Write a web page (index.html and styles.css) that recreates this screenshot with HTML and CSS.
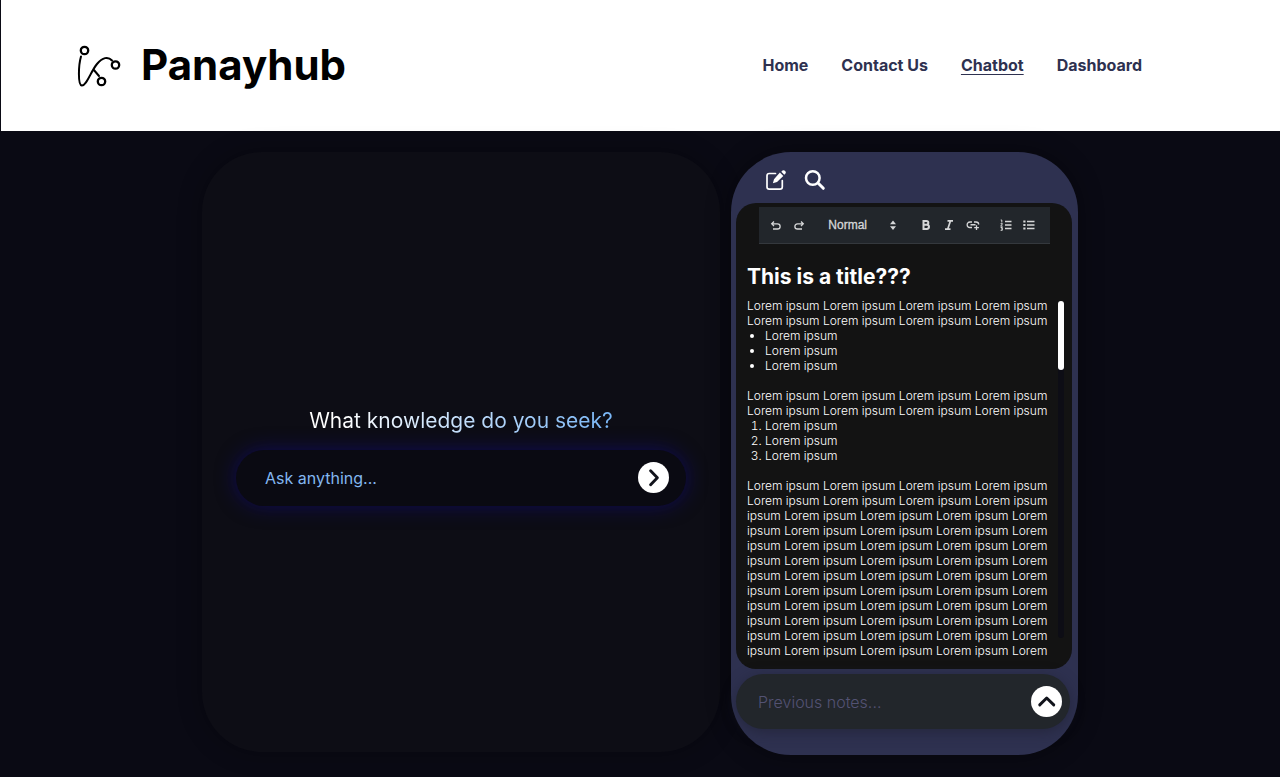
FILE: index.html
```html
<!DOCTYPE html>
<html lang="en">
<head>
<meta charset="utf-8">
<meta name="viewport" content="width=device-width, initial-scale=1">
<title>Panayhub</title>
<link rel="stylesheet" href="styles.css">
</head>
<body>
<header class="site-header">
  <div class="brand">
    <svg class="brand-mark" viewBox="0 -1 44 44" width="44" height="44" fill="none" stroke="#000" stroke-linecap="round" aria-hidden="true">
      <g stroke-width="2.3"><circle cx="7.5" cy="6.5" r="3.7"/><circle cx="38.5" cy="21" r="3.7"/><circle cx="24.5" cy="37.5" r="3.7"/></g>
      <path stroke-width="2" d="M4 12.500C1.500 21 .7 41 4.800 41.500C9.500 42 14 27 20 20C25.500 13.500 31 12 35 16.500M16.500 25.500L22 32"/>
    </svg>
    <span class="brand-name">Panayhub</span>
  </div>
  <nav class="site-nav">
    <a href="#">Home</a>
    <a href="#">Contact Us</a>
    <a href="#" class="active">Chatbot</a>
    <a href="#">Dashboard</a>
  </nav>
</header>
<main class="workspace">
  <section class="chat">
    <h1 class="chat-title">What knowledge do you seek?</h1>
    <form class="chat-form">
      <input class="chat-input" type="text" placeholder="Ask anything..." aria-label="Ask anything">
      <button class="round-button" type="button" aria-label="Send"><svg viewBox="0 0 32 32" width="31" height="31"><path d="M13 9L20 16.200L13 23.500"/></svg></button>
    </form>
  </section>
  <section class="notes">
    <div class="notes-actions">
      <button class="icon-button" type="button" aria-label="New note">
        <svg viewBox="0 0 22 22" width="22" height="22" fill="none" stroke="#fff" stroke-width="1.700" stroke-linecap="round" stroke-linejoin="round"><path d="M10.500 4.500H4.300Q2 4.500 2 6.800V18Q2 20.200 4.300 20.200H15Q17.300 20.200 17.300 18V11.500"/><path fill="#fff" stroke="none" d="M14.900 3.500L18.300 6.900L12 13L7.900 14.300L9 10.300ZM16.300 2.700L17.500 1.500Q18.800 .6 20.200 1.900Q21.400 3.200 20.500 4.400L19.300 5.800Z"/></svg>
      </button>
      <button class="icon-button" type="button" aria-label="Search">
        <svg viewBox="0 0 22 22" width="22" height="22" fill="none" stroke="#fff" stroke-linecap="round"><circle cx="8.800" cy="9" r="6.800" stroke-width="2.500"/><path stroke-width="3" d="M14.300 14.300L19.300 19.300"/></svg>
      </button>
    </div>
    <div class="sheet">
      <div class="toolbar" role="toolbar" aria-label="Text formatting">
        <div class="tool-group">
          <button type="button" aria-label="Undo"><svg viewBox="0 0 12 12"><path d="M4 2.500L1.700 4.800L4 7.100M1.700 4.800H7.500C11 4.800 11 10 7.500 10H3"/></svg></button>
          <button type="button" aria-label="Redo"><svg viewBox="0 0 12 12"><path d="M8 2.500L10.300 4.800L8 7.100M10.300 4.800H4.500C1 4.800 1 10 4.500 10H9"/></svg></button>
        </div>
        <div class="style-picker">
          <select aria-label="Text style"><option>Normal</option></select>
          <svg viewBox="0 0 12 12" aria-hidden="true"><path class="solid" d="M6 1.500L9 5.300H3ZM6 11L9 7.200H3Z"/></svg>
        </div>
        <div class="tool-group">
          <button type="button" aria-label="Bold"><svg viewBox="0 0 12 12"><path stroke-width="2" d="M3.500 2H6.300C9 2 9 5.700 6.300 5.700H3.500ZM3.500 5.700H6.800C9.700 5.700 9.700 10 6.800 10H3.500Z"/></svg></button>
          <button type="button" aria-label="Italic"><svg viewBox="0 0 12 12"><path stroke-width="1.700" d="M4.500 1.800H10M2 10.200H7.500M7.500 1.800L4.700 10.200"/></svg></button>
          <button type="button" aria-label="Insert link"><svg viewBox="0 0 14 12" class="link-icon"><path d="M6 3H4C.2 3 .2 8.500 4 8.500H6M8 3H10C11.700 3 12.700 4 12.700 5.500M4.500 5.750H9.500M10.500 6.300V11M8.200 8.600H12.900"/></svg></button>
        </div>
        <div class="tool-group">
          <button type="button" aria-label="Numbered list"><svg viewBox="0 0 12 12"><path d="M5 2.500H11.500M5 6H11.500M5 9.500H11.500"/><path stroke-width="1" d="M.7 1H1.800V3.500M.6 4.700H2.500L.7 7.200H2.700M.6 8.500H2.300V11.300H.6M1.100 9.900H2.300"/></svg></button>
          <button type="button" aria-label="Bulleted list"><svg viewBox="0 0 12 12"><path d="M4 2.500H11.500M4 6H11.500M4 9.500H11.500"/><path class="solid" d="M.3 1.500H2.500V3.500H.3ZM.3 5H2.500V7H.3ZM.3 8.500H2.500V10.500H.3Z"/></svg></button>
        </div>
      </div>
      <h2 class="note-title">This is a title???</h2>
      <div class="note-scroll">
        <div class="note-body">
          <p>Lorem ipsum Lorem ipsum Lorem ipsum Lorem ipsum Lorem ipsum Lorem ipsum Lorem ipsum Lorem ipsum</p>
          <ul><li>Lorem ipsum</li><li>Lorem ipsum</li><li>Lorem ipsum</li></ul>
          <p>Lorem ipsum Lorem ipsum Lorem ipsum Lorem ipsum Lorem ipsum Lorem ipsum Lorem ipsum Lorem ipsum</p>
          <ol><li>Lorem ipsum</li><li>Lorem ipsum</li><li>Lorem ipsum</li></ol>
          <p>
            Lorem ipsum Lorem ipsum Lorem ipsum Lorem ipsum
            Lorem ipsum Lorem ipsum Lorem ipsum Lorem ipsum
            ipsum Lorem ipsum Lorem ipsum Lorem ipsum Lorem
            ipsum Lorem ipsum Lorem ipsum Lorem ipsum Lorem
            ipsum Lorem ipsum Lorem ipsum Lorem ipsum Lorem
            ipsum Lorem ipsum Lorem ipsum Lorem ipsum Lorem
            ipsum Lorem ipsum Lorem ipsum Lorem ipsum Lorem
            ipsum Lorem ipsum Lorem ipsum Lorem ipsum Lorem
            ipsum Lorem ipsum Lorem ipsum Lorem ipsum Lorem
            ipsum Lorem ipsum Lorem ipsum Lorem ipsum Lorem
            ipsum Lorem ipsum Lorem ipsum Lorem ipsum Lorem
            ipsum Lorem ipsum Lorem ipsum Lorem ipsum Lorem
          </p>
        </div>
        <div class="scroll-track"><div class="scroll-thumb"></div></div>
      </div>
    </div>
    <div class="previous">
      <input class="previous-input" type="text" placeholder="Previous notes..." aria-label="Previous notes">
      <button class="round-button" type="button" aria-label="Show previous notes"><svg viewBox="0 0 32 32" width="31" height="31"><path d="M9 19.500L16.200 12.300L23.500 19.500"/></svg></button>
    </div>
  </section>
</main>
</body>
</html>
```
FILE: styles.css
```css
* { box-sizing: border-box; }

body {
  margin: 0;
  min-height: 100vh;
  display: flex;
  flex-direction: column;
  background: #0a0a14;
  color: #fff;
  font-family: Inter, "Liberation Sans", sans-serif;
}

button, input, select { font: inherit; color: inherit; margin: 0; padding: 0; border: 0; background: none; }
button { cursor: pointer; }
h1, h2, p, ul, ol { margin: 0; padding: 0; }

.site-header {
  display: flex;
  align-items: center;
  justify-content: space-between;
  padding: 38px 138px 40px 76px;
  border-left: 1px solid #0a0a14;
  background: #fff;
}

.brand { display: flex; align-items: center; gap: 20px; color: #000; }
.brand-mark { display: block; }
.brand-name { font-size: 42px; line-height: 53px; font-weight: 700; }

.site-nav { display: flex; gap: 33px; font-size: 16px; line-height: 20px; font-weight: 700; }
.site-nav a { color: #2e3150; text-decoration: none; }
.site-nav .active { text-decoration: underline; text-decoration-thickness: 1px; text-underline-offset: 3px; }

.workspace {
  flex: 1;
  width: 100%;
  max-width: 876px;
  margin: 0 auto;
  padding: 21px 0 22px;
  display: grid;
  grid-template-columns: 518fr 347fr;
  gap: 11px;
}

.chat {
  display: flex;
  flex-direction: column;
  justify-content: center;
  gap: 15px;
  margin-bottom: 3px;
  padding: 8px 34px 0;
  border-radius: 60px;
  background: #0d0d15;
  box-shadow: 0 0 24px rgba(0, 0, 0, 0.3);
}

.chat-title {
  align-self: center;
  font-size: 21px;
  line-height: 28px;
  font-weight: 400;
  background: linear-gradient(90deg, #fff 10%, #6aaef5 110%);
  background-clip: text;
  -webkit-background-clip: text;
  color: transparent;
}

.chat-form {
  display: flex;
  align-items: center;
  height: 56px;
  padding: 0 17px 0 29px;
  border-radius: 28px;
  background: #0a0a12;
  box-shadow: 0 0 20px 0 rgba(16, 8, 150, 0.5);
}

.chat-input, .previous-input { flex: 1; min-width: 0; font-size: 16px; line-height: 20px; outline: 0; }
.chat-input::placeholder { color: #83b7f0; opacity: 1; }
.previous-input::placeholder { color: #535273; opacity: 1; }

.round-button { width: 31px; height: 31px; border-radius: 50%; background: #fff; }
.round-button svg { display: block; fill: none; stroke: #11131b; stroke-width: 3; stroke-linecap: round; stroke-linejoin: round; }

.notes {
  display: flex;
  flex-direction: column;
  padding: 0 6px 26px 5px;
  border-radius: 60px;
  background: #2e3150;
  box-shadow: 0 0 24px rgba(0, 0, 0, 0.4);
}

.notes-actions { display: flex; align-items: center; gap: 17px; height: 51px; padding: 4px 29px 0; }
.icon-button svg { display: block; }

.sheet { flex: 1; padding: 4px 8px 10px 11px; border-radius: 20px; background: #131313; }

.toolbar {
  display: flex;
  align-items: center;
  justify-content: space-between;
  height: 37px;
  margin: 0 14px 0 12px;
  padding: 0 15px 0 11px;
  border-bottom: 1px solid #34383d;
  background: #22262b;
}

.toolbar svg { display: block; width: 12px; height: 12px; fill: none; stroke: #d6d7d8; stroke-width: 1.3; }
.toolbar .link-icon { width: 14px; }
.toolbar .solid { fill: #d6d7d8; stroke: none; }
.tool-group { display: flex; gap: 11px; }
.style-picker { display: flex; align-items: center; gap: 12px; padding-left: 3px; }
.style-picker select { appearance: none; width: 47px; color: #d6d7d8; font-family: "Liberation Sans", sans-serif; font-size: 12px; line-height: 16px; font-weight: 400; -webkit-text-stroke: 0.3px #d6d7d8; }

.note-title { margin-top: 19px; font-size: 21px; line-height: 28px; font-weight: 700; }

.note-scroll { display: flex; justify-content: space-between; margin-top: 7px; }
.note-body { flex: 1; max-width: 305px; font-size: 12px; line-height: 15px; font-weight: 300; }
.note-body ul, .note-body ol { padding-left: 18px; margin-bottom: 15px; }

.scroll-track { width: 6px; margin: 3px 0 20px; border-radius: 3px; background: #0d0d15; }
.scroll-thumb { height: 69px; border-radius: 3px; background: #fff; }

.previous {
  display: flex;
  align-items: center;
  height: 55px;
  margin: 5px 2px 0 0;
  padding: 0 8px 0 22px;
  border-radius: 28px;
  background: #22262b;
  box-shadow: 0 3px 14px rgba(30, 32, 48, 0.6);
}
.previous-input { font-weight: 300; }
```
